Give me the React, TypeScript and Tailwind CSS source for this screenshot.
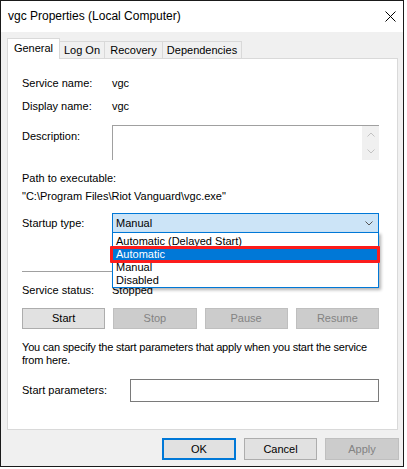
const tabs = [
  { label: "General", width: "w-[53px]", active: true },
  { label: "Log On", width: "w-[45px]", active: false },
  { label: "Recovery", width: "w-[58px]", active: false },
  { label: "Dependencies", width: "w-[79px]", active: false },
];

const options = ["Automatic (Delayed Start)", "Automatic", "Manual", "Disabled"];

function Chevron({ up = false, color }: { up?: boolean; color: string }) {
  return (
    <svg width="8" height="5" viewBox="0 0 8 5">
      <polyline
        points={up ? "0.5,4.5 4,1 7.5,4.5" : "0.5,0.5 4,4 7.5,0.5"}
        fill="none"
        stroke={color}
        strokeWidth="1"
      />
    </svg>
  );
}

function ServiceButton({ label, disabled = false }: { label: string; disabled?: boolean }) {
  return (
    <div
      className={`flex h-[21px] items-center justify-center border ${
        disabled
          ? "border-[#bfbfbf] bg-[#cccccc] text-[#838383]"
          : "border-[#adadad] bg-[#e1e1e1] text-black"
      }`}
    >
      {label}
    </div>
  );
}

export default function App() {
  return (
    <div className="h-[469px] w-[407px] bg-white font-['Liberation_Sans',Arial,sans-serif] text-[11px] leading-[13px] text-black">
      <div className="flex h-[467px] w-[404px] flex-col border border-[#1a1a1a] bg-[#f0f0f0]">

        {/* title bar */}
        <div className="flex h-[31px] shrink-0 items-center justify-between bg-white pl-[7px] pr-[7px]">
          <span className="text-[12px]">vgc Properties (Local Computer)</span>
          <svg width="11" height="11" viewBox="0 0 11 11">
            <path d="M0.5 0.5 L10.5 10.5 M10.5 0.5 L0.5 10.5" stroke="#000" strokeWidth="1" />
          </svg>
        </div>

        {/* tabs */}
        <div className="ml-[6px] mt-[6px] flex h-[21px] items-end">
          {tabs.map((tab) =>
            tab.active ? (
              <div
                key={tab.label}
                className={`relative z-10 flex h-[21px] ${tab.width} items-center justify-center border-l border-r border-t border-[#d9d9d9] bg-white pb-[2px]`}
              >
                {tab.label}
              </div>
            ) : (
              <div
                key={tab.label}
                className={`flex h-[18px] ${tab.width} items-center justify-center border-r border-t border-[#d9d9d9] bg-[#f0f0f0]`}
              >
                {tab.label}
              </div>
            )
          )}
        </div>

        {/* panel */}
        <div className="relative -mt-px ml-[6px] h-[372px] w-[391px] border border-[#d9d9d9] bg-white pl-[14px] pr-[18px] pt-[18px]">

          <div className="flex h-[13px] items-center">
            <span className="w-[90px]">Service name:</span>
            <span>vgc</span>
          </div>

          <div className="mt-[10px] flex h-[13px] items-center">
            <span className="w-[90px]">Display name:</span>
            <span>vgc</span>
          </div>

          <div className="mt-[12px] flex h-[35px]">
            <span className="w-[90px] pt-[5px]">Description:</span>
            <div className="flex w-[267px] border-l border-t border-[#a0a0a0]">
              <div className="flex-1 bg-white" />
              <div className="flex w-[17px] flex-col bg-[#f0f0f0]">
                <div className="flex h-[17px] items-center justify-center">
                  <Chevron up color="#c2c2c2" />
                </div>
                <div className="flex h-[17px] items-center justify-center">
                  <Chevron color="#c2c2c2" />
                </div>
              </div>
            </div>
          </div>

          <div className="mt-[12px] h-[13px]">Path to executable:</div>
          <div className="mt-[5px] h-[13px]">"C:\Program Files\Riot Vanguard\vgc.exe"</div>

          <div className="mt-[10px] flex h-[20px] items-center">
            <span className="w-[90px]">Startup type:</span>
            <div className="flex h-[20px] w-[267px] items-center justify-between border border-[#0078d7] bg-[#cce4f7] pl-[3px] pr-[5px]">
              <span>Manual</span>
              <Chevron color="#555" />
            </div>
          </div>

          <div className="mt-[38px] h-px bg-[#a0a0a0]" />

          <div className="mt-[12px] flex h-[13px] items-center">
            <span className="w-[90px]">Service status:</span>
            <span>Stopped</span>
          </div>

          <div className="mt-[11px] grid grid-cols-4 gap-[8px]">
            <ServiceButton label="Start" />
            <ServiceButton label="Stop" disabled />
            <ServiceButton label="Pause" disabled />
            <ServiceButton label="Resume" disabled />
          </div>

          <div className="mt-[12px] whitespace-nowrap tracking-[-0.2px]">
            You can specify the start parameters that apply when you start the service
            <br />
            from here.
          </div>

          <div className="mt-[12px] flex h-[23px] items-center">
            <span className="w-[108px]">Start parameters:</span>
            <div className="h-[23px] flex-1 border border-[#7a7a7a] bg-white" />
          </div>

          {/* open dropdown list */}
          <div className="absolute left-[104px] top-[173px] w-[267px] border border-[#0078d7] bg-white pt-[2px] shadow-[2px_2px_3px_rgba(0,0,0,0.3)]">
            {options.map((option) => (
              <div
                key={option}
                className={`h-[13px] pl-[3px] ${
                  option === "Automatic" ? "bg-[#0078d7] text-white" : ""
                }`}
              >
                {option}
              </div>
            ))}
            <div className="absolute left-[-3px] top-[13px] h-[17px] w-[270px] rounded-[1px] border-[3px] border-[#fb1c1c]" />
          </div>
        </div>

        {/* dialog buttons */}
        <div className="mt-[8px] flex justify-end gap-[8px] pr-[4px]">
          <div className="flex h-[22px] w-[74px] items-center justify-center border-2 border-[#0078d7] bg-[#e1e1e1]">
            OK
          </div>
          <div className="flex h-[22px] w-[73px] items-center justify-center border border-[#adadad] bg-[#e1e1e1]">
            Cancel
          </div>
          <div className="flex h-[22px] w-[74px] items-center justify-center border border-[#bfbfbf] bg-[#cccccc] text-[#838383]">
            Apply
          </div>
        </div>
      </div>
    </div>
  );
}
